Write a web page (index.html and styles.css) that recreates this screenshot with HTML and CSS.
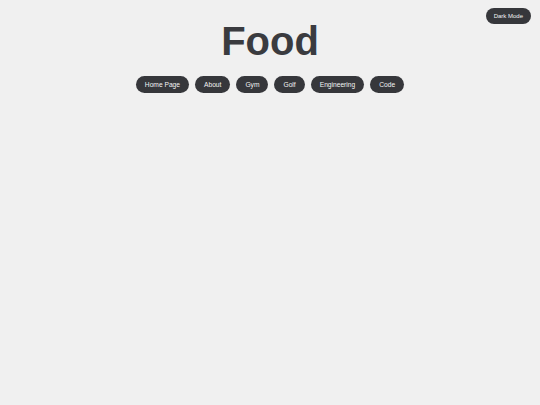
FILE: index.html
```html
<!DOCTYPE html>
<html lang="en">
<head>
    <meta charset="UTF-8">
    <meta name="viewport" content="width=device-width, initial-scale=1.0">
    <title>Food</title>
    <link rel="stylesheet" href="styles.css">
</head>
<body>
    <button class="theme-toggle" id="themeToggle">Dark Mode</button>
    <header>
        <h1>Food</h1>
        <nav>
            <a href="#" class="nav-btn">Home Page</a>
            <a href="#" class="nav-btn">About</a>
            <a href="#" class="nav-btn">Gym</a>
            <a href="#" class="nav-btn">Golf</a>
            <a href="#" class="nav-btn">Engineering</a>
            <a href="#" class="nav-btn">Code</a>
        </nav>
    </header>
</body>
</html>
```

FILE: styles.css
```css
body, html {
    margin: 0;
    padding: 0;
    font-family: "Liberation Sans", Arial, sans-serif;
    background-color: #f0f0f0;
    color: #3a3b3f;
}
header {
    display: flex;
    flex-direction: column;
    align-items: center;
    padding-top: 18px;
}
h1 {
    margin: 0;
    font-size: 40px;
    line-height: 46px;
    font-weight: bold;
}
nav {
    display: flex;
    gap: 6px;
    margin-top: 12px;
}
.nav-btn {
    display: flex;
    align-items: center;
    height: 17px;
    padding: 0 9px;
    border-radius: 9px;
    background-color: #36373b;
    color: #f4f4f4;
    font-size: 6.67px;
    text-decoration: none;
}
.theme-toggle {
    position: absolute;
    top: 8px;
    right: 9px;
    height: 16px;
    padding: 0 8px;
    border: none;
    border-radius: 8px;
    background-color: #36373b;
    color: #f4f4f4;
    font-family: "Liberation Sans", Arial, sans-serif;
    font-size: 6px;
    cursor: pointer;
}
```
